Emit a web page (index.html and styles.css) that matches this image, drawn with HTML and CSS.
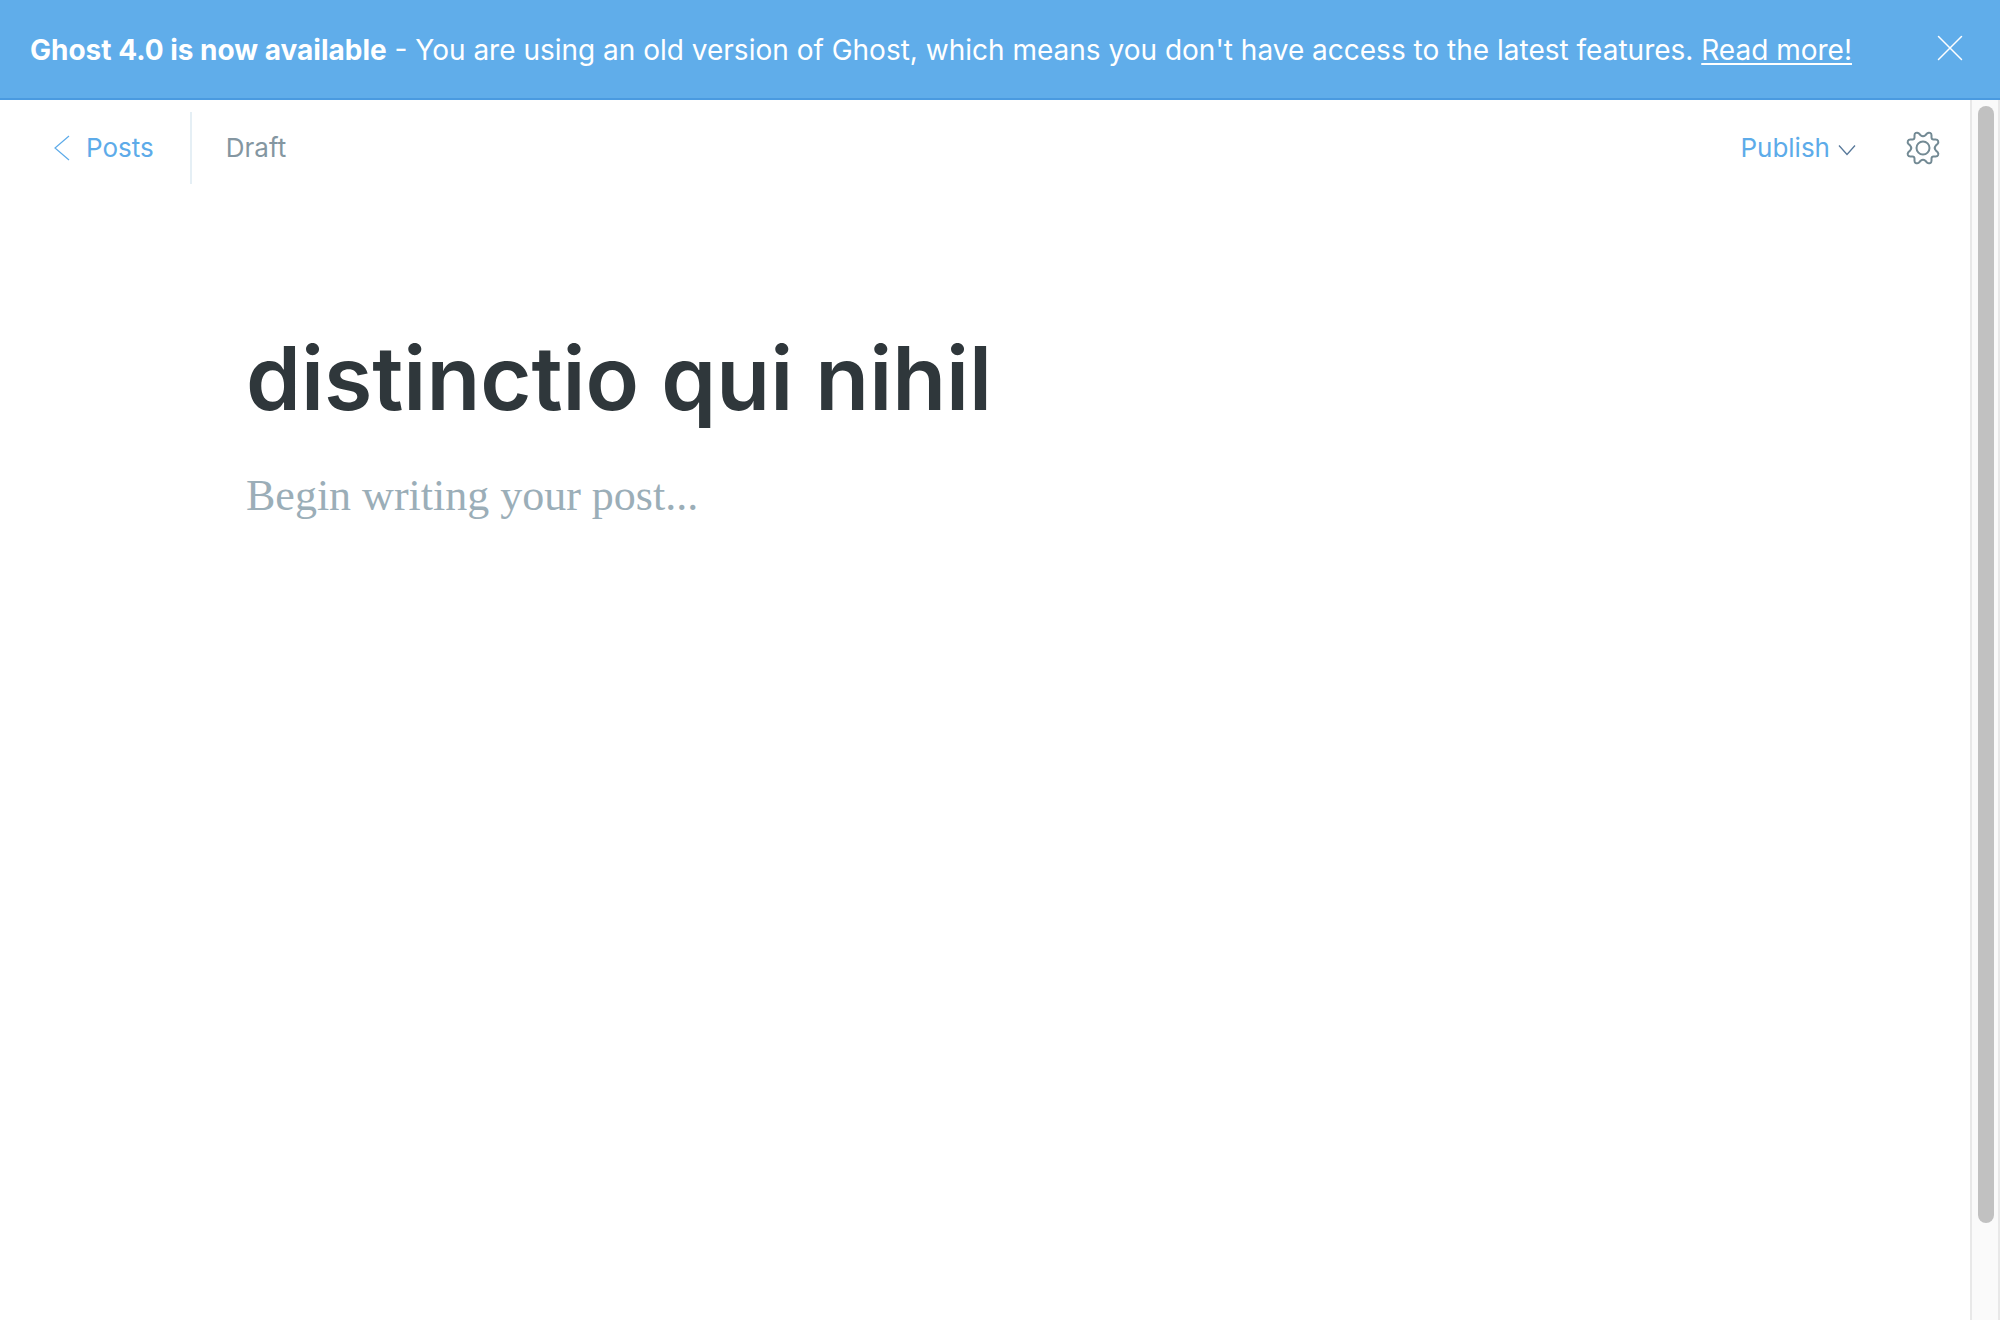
FILE: index.html
```html
<!DOCTYPE html>
<html lang="en">
<head>
<meta charset="utf-8">
<title>Editor - Ghost</title>
<link rel="stylesheet" href="styles.css">
</head>
<body>
<div class="app">
  <aside class="alert">
    <p class="alert-text"><strong>Ghost 4.0 is now available</strong> - You are using an old version of Ghost, which means you don't have access to the latest features. <a class="alert-link" href="#">Read more!</a></p>
    <button class="icon-button alert-close" type="button" aria-label="Close">
      <svg width="26" height="26" viewBox="0 0 26 26" fill="none" stroke="currentColor" stroke-width="1.500" stroke-linecap="round"><path d="M1.500 1.500l23 23M24.500 1.500l-23 23"/></svg>
    </button>
  </aside>
  <div class="viewport">
    <main class="editor">
      <header class="editor-header">
        <a class="back" href="#">
          <svg width="16" height="26" viewBox="0 0 16 26" fill="none" stroke="currentColor" stroke-width="1.200"><path d="M15 1L1 13l14 12"/></svg>
          Posts
        </a>
        <span class="status">Draft</span>
        <button class="publish" type="button">
          Publish
          <svg class="caret" width="18" height="12" viewBox="0 0 18 12" fill="none" stroke="currentColor" stroke-width="1.300"><path d="M1 1.500l8 9 8-9"/></svg>
        </button>
        <button class="icon-button settings" type="button" aria-label="Settings">
          <svg width="34" height="34" viewBox="0 0 34 34" fill="none" stroke="currentColor" stroke-width="2" stroke-linejoin="round"><circle cx="17" cy="17" r="6.500"/><path d="M14.600 4.200 Q17 6.400 19.400 4.200 L21 2.500 Q22.400 1.200 24.200 1.900 Q25.500 2.500 25.500 4.300 V6.500 Q25.600 8.400 27.500 8.500 H29.700 Q31.500 8.500 32.100 9.800 Q32.800 11.600 31.500 13 L29.800 14.600 Q27.600 17 29.800 19.400 L31.500 21 Q32.800 22.400 32.100 24.200 Q31.500 25.500 29.700 25.500 H27.500 Q25.600 25.600 25.500 27.500 V29.700 Q25.500 31.500 24.200 32.100 Q22.400 32.800 21 31.500 L19.400 29.800 Q17 27.600 14.600 29.800 L13 31.500 Q11.600 32.800 9.800 32.100 Q8.500 31.500 8.500 29.700 V27.500 Q8.400 25.600 6.500 25.500 H4.300 Q2.500 25.500 1.900 24.200 Q1.200 22.400 2.500 21 L4.200 19.400 Q6.400 17 4.200 14.600 L2.500 13 Q1.200 11.600 1.900 9.800 Q2.500 8.500 4.300 8.500 H6.500 Q8.400 8.400 8.500 6.500 V4.300 Q8.500 2.500 9.800 1.900 Q11.600 1.200 13 2.500 Z"/></svg>
        </button>
      </header>
      <form class="post">
        <input class="post-title" type="text" aria-label="Post title" value="distinctio qui nihil">
        <textarea class="post-body" aria-label="Post content" placeholder="Begin writing your post..."></textarea>
      </form>
    </main>
    <div class="scroll-track" aria-hidden="true"><div class="scroll-thumb"></div></div>
  </div>
</div>
</body>
</html>
```
FILE: styles.css
```css
*, *::before, *::after { box-sizing: border-box; }

body {
  margin: 0;
  background: #fff;
  color: #2f373b;
  font-family: Inter, "Liberation Sans", sans-serif;
  font-size: 28px;
}

button, input, textarea {
  margin: 0;
  padding: 0;
  border: 0;
  outline: 0;
  background: none;
  color: inherit;
  font: inherit;
}

svg { display: block; }

.app {
  display: flex;
  flex-direction: column;
  height: 100vh;
}

.alert {
  display: flex;
  align-items: center;
  justify-content: space-between;
  padding: 28px 36px 26px 30px;
  border-bottom: 2px solid #4a9ae0;
  background: #60adea;
  color: #fff;
}

.alert-text {
  margin: 0;
  font-weight: 400;
  line-height: 44px;
  white-space: nowrap;
}

.alert-text strong { font-weight: 700; }

.alert-link {
  color: inherit;
  text-decoration-thickness: 2px;
  text-underline-offset: 3px;
}

.icon-button { cursor: pointer; }

.alert-close { padding: 0 1px 4px; }

.viewport {
  display: flex;
  flex: 1;
  min-height: 0;
}

.editor {
  flex: 1;
  min-width: 0;
}

.editor-header {
  display: flex;
  align-items: center;
  padding: 12px 30px 0 54px;
  font-size: 26px;
  line-height: 72px;
}

.back {
  display: flex;
  align-items: center;
  gap: 16px;
  padding-right: 36px;
  border-right: 2px solid #e5eff5;
  color: #5dabe9;
  text-decoration: none;
}

.status {
  padding-left: 34px;
  color: #8496a1;
}

.publish {
  display: flex;
  align-items: center;
  gap: 8px;
  margin-left: auto;
  color: #5dabe9;
}

.caret {
  margin-top: 4px;
  color: #57789a;
}

.settings {
  margin-left: 50px;
  color: #738a94;
}

.post {
  display: flex;
  flex-direction: column;
  padding: 134px 246px 0;
}

.post-title {
  width: 100%;
  height: 120px;
  font-size: 88px;
  font-weight: 600;
  line-height: 120px;
}

.post-body {
  height: 640px;
  margin-top: 28px;
  resize: none;
  font-family: Georgia, "Liberation Serif", serif;
  font-size: 44px;
  line-height: 60px;
}

.post-body::placeholder { color: #9baeb8; }

.scroll-track {
  flex: none;
  width: 30px;
  padding: 6px 4px 6px 6px;
  border: solid #e8e8e8;
  border-width: 0 2px;
  background: #fafafa;
}

.scroll-thumb {
  width: 16px;
  height: 92.5%;
  border-radius: 8px;
  background: #c1c1c1;
}
```
